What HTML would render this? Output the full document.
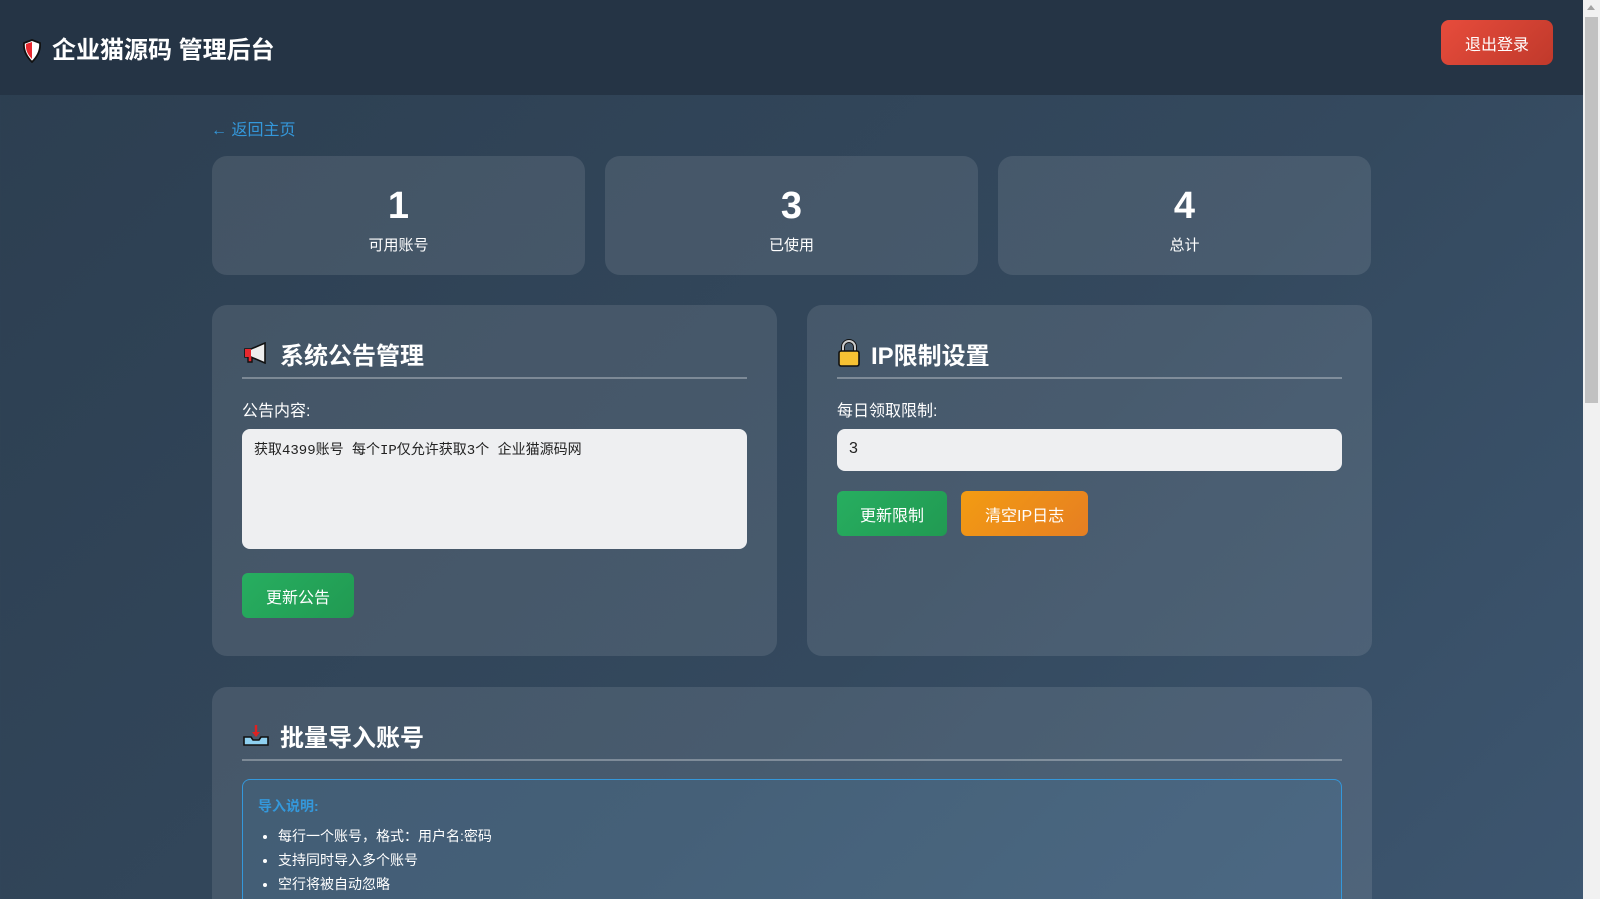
<!DOCTYPE html>
<html><head><meta charset="utf-8"><style>
*{box-sizing:border-box;margin:0;padding:0}
html,body{width:1600px;height:899px;overflow:hidden}
body{font-family:"Liberation Sans","Noto Sans CJK SC",sans-serif;color:#fff;background:linear-gradient(135deg,#2c3e50 0%,#34495e 60%,#3d5670 100%);position:relative}
.hdr{position:absolute;left:0;top:0;width:1583px;height:95px;background:#253445;}
.title{position:absolute;left:22px;top:36px;font-size:24px;font-weight:bold;line-height:30px;display:flex;align-items:center;gap:10px}
.logout{position:absolute;left:1441px;top:20px;width:112px;height:45px;border-radius:8px;background:linear-gradient(135deg,#e74c3c,#c0392b);font-size:16px;display:flex;align-items:center;justify-content:center}
.sb{position:absolute;left:1583px;top:0;width:17px;height:899px;background:#f1f1f1}
.sb div{position:absolute;left:2px;top:17px;width:13px;height:386px;background:#c1c1c1}
.sb span{position:absolute;left:4px;top:5px;border:4px solid transparent;border-bottom:5px solid #a3a3a3;border-top:0}
.back{position:absolute;left:211px;top:116px;color:#3498db;font-size:16px}
.card{position:absolute;background:rgba(255,255,255,0.1);border-radius:15px}
.stat{top:156px;height:119px;width:373px;text-align:center}
.num{font-size:38px;font-weight:bold;margin-top:28px;line-height:44px}
.lbl{font-size:15px;margin-top:6px}
h2{font-size:24px;font-weight:bold;display:flex;align-items:center;gap:10px;height:46px;border-bottom:2px solid rgba(255,255,255,0.3);padding-bottom:4px;margin-bottom:18px}
.p{padding:28px 30px}
label{display:block;font-size:16px;margin-bottom:8px}
.ta{height:120px;border-radius:8px;background:#eeeff1;color:#222;font-family:"Liberation Mono","Noto Sans CJK SC",monospace;font-size:14px;padding:10px 12px;margin-bottom:24px}
.in{height:42px;border-radius:8px;background:#eeeff1;color:#222;font-size:16px;padding:11px 12px;margin-bottom:20px}
.btn{display:inline-flex;align-items:center;justify-content:center;height:45px;border-radius:6px;font-size:16px;padding:0 23px;margin-right:14px}
.g{background:linear-gradient(135deg,#27ae60,#219a52)}
.o{background:linear-gradient(135deg,#f39c12,#e67e22)}
.info{border:1px solid #3498db;border-radius:8px;background:rgba(52,152,219,0.1);padding:16px 15px;height:200px}
.info b{color:#3498db;font-size:14px;display:block;margin-bottom:8px}
.info li{font-size:14px;margin-left:20px;line-height:24px}
</style></head><body>
<div class="hdr">
<div class="title"><svg width="20" height="24" viewBox="0 0 20 24"><path d="M10 1 L18 4 Q19 14 10 23 Q1 14 2 4Z" fill="#fff" stroke="#111" stroke-width="1.8"/><path d="M10 3 L16 5 Q17 13 10 20Z" fill="#e8282e" transform="scale(-1,1) translate(-20,0)"/></svg>企业猫源码 管理后台</div>
<div class="logout">退出登录</div>
</div>
<div class="sb"><span></span><div></div></div>
<div class="back">← 返回主页</div>
<div class="card stat" style="left:212px"><div class="num">1</div><div class="lbl">可用账号</div></div>
<div class="card stat" style="left:605px"><div class="num">3</div><div class="lbl">已使用</div></div>
<div class="card stat" style="left:998px"><div class="num">4</div><div class="lbl">总计</div></div>
<div class="card p" style="left:212px;top:305px;width:565px;height:351px">
<h2><svg width="28" height="22" viewBox="0 0 28 22"><path d="M3 7h6l14-6v20L9 15H3z" fill="#eee" stroke="#111" stroke-width="1.6"/><rect x="3" y="7" width="6" height="8" fill="#e8282e"/><path d="M6 15v5h4v-5" fill="#e8282e" stroke="#111" stroke-width="1.4"/></svg>系统公告管理</h2>
<label>公告内容:</label>
<div class="ta">获取4399账号 每个IP仅允许获取3个 企业猫源码网</div>
<span class="btn g" style="width:112px;padding:0">更新公告</span>
</div>
<div class="card p" style="left:807px;top:305px;width:565px;height:351px">
<h2><svg width="24" height="28" viewBox="0 0 24 28"><path d="M6 12V8a6 6 0 0 1 12 0v4" fill="none" stroke="#111" stroke-width="4"/><path d="M6 12V8a6 6 0 0 1 12 0v4" fill="none" stroke="#ccc" stroke-width="2"/><rect x="2" y="12" width="20" height="15" rx="2" fill="#f7c233" stroke="#111" stroke-width="1.6"/></svg>IP限制设置</h2>
<label>每日领取限制:</label>
<div class="in">3</div>
<span class="btn g">更新限制</span><span class="btn o" style="padding:0 24px">清空IP日志</span>
</div>
<div class="card p" style="left:212px;top:687px;width:1160px;height:212px;border-radius:15px 15px 0 0">
<h2><svg width="28" height="24" viewBox="0 0 28 24"><path d="M2 14h7l2 3h6l2-3h7v8H2z" fill="#8fd0f0" stroke="#111" stroke-width="1.6"/><path d="M14 2v11" stroke="#d22" stroke-width="2.4"/><path d="M10 9l4 5 4-5z" fill="#d22"/></svg>批量导入账号</h2>
<div class="info" style="height:140px;border-bottom:none;border-radius:8px 8px 0 0"><b>导入说明:</b><ul><li>每行一个账号，格式：用户名:密码</li><li>支持同时导入多个账号</li><li>空行将被自动忽略</li></ul></div>
</div>
</body></html>
